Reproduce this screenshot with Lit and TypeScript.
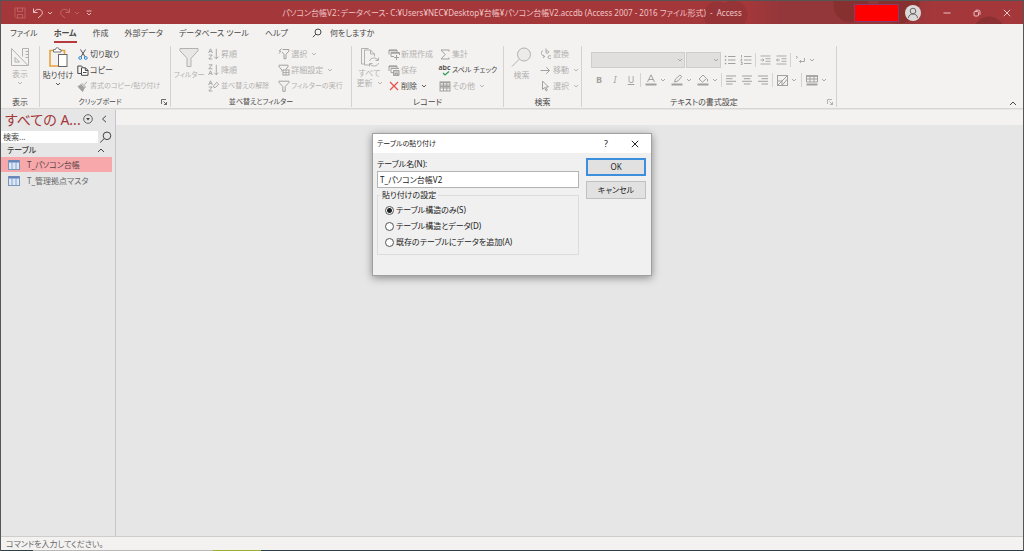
import { LitElement, html, svg, css, type SVGTemplateResult, type TemplateResult } from "lit";
import { customElement, property, state } from "lit/decorators.js";
import { classMap } from "lit/directives/class-map.js";

const icon = (w: number, h: number, body: SVGTemplateResult) => html`
  <svg width=${w} height=${h} viewBox="0 0 ${w} ${h}" fill="none" stroke="currentColor" stroke-width="1" aria-hidden="true">${body}</svg>`;

const chevron = icon(6, 4, svg`<path d="M1 1l2 2 2-2" stroke-width=".9"/>`);

const icons: Record<string, TemplateResult> = {
  save: icon(12, 12, svg`<path d="M1 1h10v10H2.500L1 9.500zM3.500 1v3.500h5V1M3.500 11V7.500h5V11" stroke-width=".8"/>`),
  undo: icon(12, 12, svg`<path d="M1.500 1.500v4h4M1.800 5.200C3 3.200 5 2 7.300 2.400c3 .6 4 3.800 2 5.800L6 11"/>`),
  redo: icon(12, 12, svg`<path d="M10.500 1.500v4h-4M10.200 5.200C9 3.200 7 2 4.700 2.400c-3 .6-4 3.800-2 5.800L6 11"/>`),
  more: icon(6, 6, svg`<path d="M.5 1h5M1 3l2 2 2-2" stroke-width=".9"/>`),
  search: icon(10, 10, svg`<circle cx="6" cy="4" r="3"/><path d="M3.800 6.200L.8 9.200"/>`),
  searchBig: icon(13, 12, svg`<circle cx="8" cy="4.800" r="3.800"/><path d="M5.200 7.600L1.200 11.500"/>`),
  person: icon(16, 16, svg`<circle cx="8" cy="8" r="8" fill="#dcdad9" stroke="none"/><circle cx="8" cy="6" r="2.800" stroke="#666"/><path d="M3.500 13c0-2.600 2-4 4.500-4s4.500 1.400 4.500 4" stroke="#666"/>`),
  min: icon(8, 8, svg`<path d="M.5 4h7"/>`),
  restore: icon(8, 8, svg`<rect x="1" y="2.500" width="4.500" height="4.500" rx="1"/><path d="M2.500 1.200h3q1.500 0 1.500 1.500v3"/>`),
  close: icon(8, 8, svg`<path d="M.8.8l6.400 6.400M7.200.8L.8 7.200"/>`),
  design: icon(20, 20, svg`<path d="M1.500 1.500v17h16.500zM5 10.500v4.500h4.500z"/><path d="M12.500 9.500v-8h6v17"/><path d="M15.500 4.500h3M15.500 7.500h3M15.500 10.500h3"/>`),
  paste: icon(20, 21, svg`<path d="M5.500 3.500H2v15.500h8M13 3.500h3.500V7" stroke="#e8a33d" stroke-width="1.600"/><path d="M5.500 5V2.500h2q0-1.800 1.800-1.800T11 2.500h2V5z" fill="#fff" stroke="#777"/><rect x="10.500" y="7.500" width="8.500" height="12" fill="#fff" stroke="#666"/>`),
  cut: icon(10, 11, svg`<path d="M2.500.5l4.700 7.500M7.500.5L2.800 8" stroke="#555"/><circle cx="2.200" cy="9" r="1.400" stroke="#2b88d8"/><circle cx="7.800" cy="9" r="1.400" stroke="#2b88d8"/>`),
  copy: icon(12, 11, svg`<path d="M4 8.500H.8V1h3.700L6 2.500" /><path d="M4.500 2.800h4l2.500 2.500v5H4.500zM8.300 3v2.500H11M6 7.500h3.500" fill="#fff"/>`),
  brush: icon(11, 11, svg`<path d="M10 .8L7.200 3.600"/><path d="M5 2.500l3.500 3.500-1 1L4 3.500z"/><path d="M3.800 4L1 5.500l4.500 5L7.200 7.300z" fill="currentColor"/>`),
  filterBig: icon(20, 21, svg`<path d="M1 1.500h18v2.300l-7 7.500v8.200H8v-8.200l-7-7.500z" fill="#e8e7e6"/>`),
  asc: icon(11, 12, svg`<path d="M.6 5L2.500.8 4.400 5M1.300 3.600h2.400M.8 7h3.400L.8 11h3.600M8.300.8v10M6.200 8.700l2.100 2.100 2.100-2.100" stroke-width=".9"/>`),
  desc: icon(11, 12, svg`<path d="M.8.800h3.400L.8 4.800h3.600M.6 11l1.900-4.200L4.400 11M1.300 9.600h2.400M8.300.8v10M6.200 8.700l2.100 2.100 2.100-2.100" stroke-width=".9"/>`),
  clearSort: icon(11, 12, svg`<path d="M.6 5L2.500.8 4.400 5M1.300 3.600h2.400M.8 7h3.400L.8 11h3.600M5.500 6l3.200-3.700 2 1.800L7.500 7.500H6z" stroke-width=".9"/>`),
  filterPick: icon(12, 12, svg`<path d="M4.500 1.500H11v1.500L8 6.200v4.500H6V6.200L4 4"/><path d="M3.500.5L1 3h2L1 5.500" stroke-width=".9"/>`),
  filterAdv: icon(12, 12, svg`<path d="M4 7.500V6L1 2.800V1.200h9v1.600L7.500 5.500"/><rect x="5" y="6" width="6" height="5"/><path d="M5 8.500h6M8 6v5" stroke-width=".8"/>`),
  filter: icon(12, 12, svg`<path d="M1 1.200h10v1.300L7.200 6.500v4.800H4.800V6.500L1 2.500z"/>`),
  refresh: icon(20, 21, svg`<path d="M4.500 17H1.500V1.500h7M9 18H4.500V3h6l4 4v2.500M10.500 3v4h4"/><path d="M9.500 14c1-3.500 6.500-4 8.500-1M18.500 10.500V13.500h-3M18.500 16c-1 3.500-6.500 4-8.500 1M9.500 19.500v-3h3"/>`),
  newRec: icon(12, 11, svg`<path d="M6 7.500H3V3.500h8.500V6M1 5.500V1h8v2M8.500 6v5M6 8.500h5"/><path d="M3 4h8M1 1.500h8" stroke-width="1.500"/>`),
  saveRec: icon(12, 11, svg`<path d="M5 7.500H3V3.500h8M1 6V1h8v2"/><path d="M1 1.500h8" stroke-width="1.500"/><path d="M5.500 5.500h5.500v5H5.500zM7 10.500V8.500h2.500v2" fill="#ccc"/>`),
  del: icon(10, 10, svg`<path d="M1 1l8 8M9 1L1 9" stroke="#e8504a" stroke-width="1.200"/>`),
  sum: icon(10, 11, svg`<path d="M9 2.500V1H1l4.200 4.500L1 10h8V8.500"/>`),
  spell: html`<span class="abc">abc</span>${icon(10, 5, svg`<path d="M3 2l2 2L9 .5" stroke="#2f9e57" stroke-width="1.200"/>`)}`,
  grid: icon(12, 11, svg`<rect x="1" y="1" width="10" height="9"/><path d="M1 4h10M1 7h10M4.500 1v9M7.800 1v9"/><path d="M1 1.500h10M1 5.500h10" stroke-width="1.500"/>`),
  find: icon(21, 21, svg`<circle cx="13" cy="7.500" r="6.500" fill="#ecebea"/><path d="M8.200 12.300L1 19.500"/>`),
  replace: icon(12, 12, svg`<path d="M6 .5v4.500M6 3.500c.5-1 2.800-1 2.800.5S6.500 5.500 6 4.800M11 8.200c-1-1-3-.6-3 1s2 2 3 1M3 2.500C.5 3.500.8 7.500 4.500 8.500M3 6.800l1.800 1.700-1.800 1.500" stroke-width=".9"/>`),
  goto: icon(11, 9, svg`<path d="M.5 4.500h9M6.200 1.200l3.300 3.300-3.300 3.300"/>`),
  pointer: icon(9, 12, svg`<path d="M1.500 1v8.500l2-2 1.500 3.300 1.300-.6-1.500-3.200h2.700z"/>`),
  bullets: icon(12, 10, svg`<path d="M4 1.500h7.500M4 5h7.500M4 8.500h7.500"/><path d="M.8 1.500h1.500M.8 5h1.500M.8 8.500h1.500" stroke-width="1.500"/>`),
  numbers: icon(12, 10, svg`<path d="M4 1.500h7.500M4 5h7.500M4 8.500h7.500M1.500 0v2.500M.8 4h1.200L.8 6h1.400M.8 7.500h1.400v2H.8" stroke-width=".9"/>`),
  indent: icon(11, 10, svg`<path d="M.5 1h10M5.500 3.700h5M5.500 6.300h5M.5 9h10M.5 5h3.500M2.500 3.500L4 5 2.500 6.500" stroke-width=".9"/>`),
  outdent: icon(11, 10, svg`<path d="M.5 1h10M5.500 3.700h5M5.500 6.300h5M.5 9h10M.5 5h3.500M2 3.500L.5 5 2 6.500" stroke-width=".9"/>`),
  direction: icon(11, 10, svg`<path d="M1 1l1.500 1.300L1 3.600M9.500 3v3.500H4.500M6 5L4.500 6.500 6 8" stroke-width=".9"/>`),
  fontColor: icon(12, 12, svg`<path d="M2.500 8L6 .8 9.500 8M3.700 5.500h4.600"/><path d="M.5 10.500h11" stroke-width="2"/>`),
  highlight: icon(12, 12, svg`<path d="M3.500 8l1-3L9 1l1.700 1.500L7 7z"/><path d="M.5 10.500h11" stroke-width="2"/>`),
  fill: icon(12, 12, svg`<path d="M2 5l4-4 3.500 3.500-4 3.700zM10.500 5v2.500"/><path d="M.5 10.500h11" stroke-width="2"/>`),
  left: icon(10, 10, svg`<path d="M0 1h10M0 3.700h6.500M0 6.300h10M0 9h6.500"/>`),
  center: icon(10, 10, svg`<path d="M0 1h10M1.800 3.700h6.500M0 6.300h10M1.800 9h6.500"/>`),
  right: icon(10, 10, svg`<path d="M0 1h10M3.500 3.700H10M0 6.300h10M3.500 9H10"/>`),
  altRow: icon(11, 11, svg`<rect x=".5" y=".5" width="10" height="10"/><path d="M.5 10.500l10-10M5 6v4.500M.5 6H5" /><path d="M5 10.500h5.500V4z"/>`),
  gridlines: icon(12, 11, svg`<path d="M.5 1h11v6H.5zM.5 4h11M4 1v6M8 1v6"/><path d="M0 1h12" stroke-width="1.600"/><path d="M.5 9.500h11" stroke-width="2"/>`),
  launcher: icon(6, 6, svg`<path d="M.5 5V.5H5M2.500 2.500l3 3M5.500 3v2.500H3" stroke-width=".8"/>`),
  up: icon(8, 5, svg`<path d="M1 4l3-3 3 3"/>`),
  back: icon(6, 8, svg`<path d="M5 .8L1.500 4 5 7.200"/>`),
  drop: icon(10, 10, svg`<circle cx="5" cy="5" r="4.300" stroke-width=".8"/><path d="M3 4h4L5 6.500z" fill="currentColor" stroke="none"/>`),
  table: icon(12, 10, svg`<rect x=".5" y=".5" width="11" height="9" fill="#dce8f7" stroke="#7d93b8"/><path d="M1 1.500h10" stroke="#5f82bb" stroke-width="2"/><path d="M4 2v7.500M8 2v7.500" stroke="#8aa4cc"/>`),
};

const shared = css`
  * { box-sizing: border-box; }
  button, input, select {
    font: inherit; color: inherit; margin: 0; padding: 0; border: 0;
    background: none; border-radius: 0; appearance: none; outline: none;
  }
  svg { display: block; flex: none; }
`;

interface Command { icon: string; label: string; live?: boolean; menu?: boolean; small?: boolean; }

@customElement("ribbon-bar")
export class RibbonBar extends LitElement {
  static styles = [shared, css`
    :host {
      display: flex; height: 65px; padding-top: 2px; background: #f3f2f1; color: #b3b1af;
      border-bottom: 1px solid #d8d6d4; font-size: 8px; line-height: 16px; white-space: nowrap;
    }
    .group { display: grid; grid-template-rows: 1fr 11px; border-right: 1px solid #d5d3d1; margin-bottom: 1px; flex: none; }
    .view { width: 39px; } .clip { width: 131px; } .sort { width: 181px; }
    .rec { width: 152px; } .find { width: 78px; } .text { width: 255px; }
    .body { display: flex; }
    .foot { display: flex; justify-content: center; align-items: center; position: relative; color: #4a4846; line-height: 11px; }
    .launch { padding-right: 10px; }
    .foot button { position: absolute; right: 3px; bottom: 2px; }
    .text .foot button { color: #a3a19f; }
    .big { display: flex; flex-direction: column; align-items: center; width: 36px; padding-top: 1px; line-height: 10px; gap: 2px; }
    .view .big { width: 38px; }
    .line { display: flex; align-items: center; gap: 4px; }
    .live { color: #4a4846; }
    .small { font-size: 7px; }
    .stack { display: flex; flex-direction: column; }
    .cmd { display: flex; align-items: center; gap: 1px; height: 16px; }
    .cmd > svg { margin-left: 3px; }
    .pic { width: 13px; display: flex; flex-direction: column; align-items: center; color: #a3a19f; }
    .live .pic { color: #4a4846; }
    .abc { font-size: 7px; line-height: 6px; font-weight: 600; }
    .sort .stack + .stack { margin-left: 8px; }
    .rec .stack + .stack { margin-left: 5px; }
    .rec .stack { min-width: 46px; }
    .rec .big { gap: 0; }
    .rec .big, .find .big { width: 35px; }
    .tools { display: flex; flex-direction: column; padding: 6px 0 0 9px; gap: 4px; color: #a3a19f; }
    .row { display: flex; align-items: center; height: 16px; }
    .combo { display: grid; grid-template-columns: 1fr 8px; align-items: center; justify-items: center; height: 16px; background: #e1dfdd; border: 1px solid #cfcdcb; margin-right: 1px; }
    .combo select { grid-area: 1 / 1 / 2 / 3; width: 100%; height: 14px; }
    .combo svg { grid-area: 1 / 2; }
    .face { width: 94px; } .size { width: 35px; }
    .tool { display: flex; align-items: center; justify-content: center; width: 16px; height: 16px; }
    .drop { width: 26px; gap: 3px; }
    .sep { width: 1px; height: 14px; background: #d5d3d1; margin: 0 1px; }
    .glyph { font-size: 9px; }
    .b { font-weight: 700; } .i { font-style: italic; } .u { text-decoration: underline; }
    .collapse { margin: auto 6px 2px auto; color: #4a4846; }
  `];

  private cmd = (c: Command) => html`
    <button class=${classMap({ cmd: true, live: !!c.live, small: !!c.small })}>
      <span class="pic">${icons[c.icon]}</span><span>${c.label}</span>${c.menu ? chevron : ""}
    </button>`;

  private stack = (items: Command[]) => html`<div class="stack">${items.map(this.cmd)}</div>`;

  private big = (name: string, label: string, live = false, menu = false, small = false) => html`
    <button class=${classMap({ big: true, live, small })}>${icons[name]}<span>${label}</span>${menu ? chevron : ""}</button>`;

  private group = (cls: string, label: string, body: unknown, launcher = false, small = false) => html`
    <section class="group ${cls}">
      <div class="body">${body}</div>
      <div class=${classMap({ foot: true, launch: launcher, small })}>${label}${launcher ? html`<button aria-label="${label}のオプション">${icons.launcher}</button>` : ""}</div>
    </section>`;

  private tool = (name: string, label: string, menu = false) => html`
    <button class=${classMap({ tool: true, drop: menu })} aria-label=${label}>${icons[name]}${menu ? chevron : ""}</button>`;

  render() {
    const sep = html`<span class="sep"></span>`;
    return html`
      ${this.group("view", "表示", this.big("design", "表示", false, true))}
      ${this.group("clip", "クリップボード", html`
        ${this.big("paste", "貼り付け", true, true)}
        ${this.stack([
          { icon: "cut", label: "切り取り", live: true },
          { icon: "copy", label: "コピー", live: true },
          { icon: "brush", label: "書式のコピー/貼り付け", small: true },
        ])}`, true, true)}
      ${this.group("sort", "並べ替えとフィルター", html`
        ${this.big("filterBig", "フィルター", false, false, true)}
        ${this.stack([
          { icon: "asc", label: "昇順" },
          { icon: "desc", label: "降順" },
          { icon: "clearSort", label: "並べ替えの解除", small: true },
        ])}
        ${this.stack([
          { icon: "filterPick", label: "選択", menu: true },
          { icon: "filterAdv", label: "詳細設定", menu: true },
          { icon: "filter", label: "フィルターの実行", small: true },
        ])}`, false, true)}
      ${this.group("rec", "レコード", html`
        <button class="big">${icons.refresh}<span>すべて</span><span class="line">更新${chevron}</span></button>
        ${this.stack([
          { icon: "newRec", label: "新規作成" },
          { icon: "saveRec", label: "保存" },
          { icon: "del", label: "削除", live: true, menu: true },
        ])}
        ${this.stack([
          { icon: "sum", label: "集計" },
          { icon: "spell", label: "スペル チェック", live: true, small: true },
          { icon: "grid", label: "その他", menu: true },
        ])}`)}
      ${this.group("find", "検索", html`
        ${this.big("find", "検索")}
        ${this.stack([
          { icon: "replace", label: "置換" },
          { icon: "goto", label: "移動", menu: true },
          { icon: "pointer", label: "選択", menu: true },
        ])}`)}
      ${this.group("text", "テキストの書式設定", html`
        <div class="tools">
          <div class="row">
            <span class="combo face"><select aria-label="フォント"></select>${chevron}</span>
            <span class="combo size"><select aria-label="フォント サイズ"></select>${chevron}</span>
            ${this.tool("bullets", "箇条書き")}${this.tool("numbers", "段落番号")}${sep}
            ${this.tool("indent", "インデント")}${this.tool("outdent", "インデント解除")}${sep}
            ${this.tool("direction", "文字列の方向", true)}
          </div>
          <div class="row">
            <button class="tool glyph b">B</button><button class="tool glyph i">I</button><button class="tool glyph u">U</button>${sep}
            ${this.tool("fontColor", "フォントの色", true)}${this.tool("highlight", "蛍光ペン", true)}${this.tool("fill", "背景色", true)}${sep}
            ${this.tool("left", "左揃え")}${this.tool("center", "中央揃え")}${this.tool("right", "右揃え")}${sep}
            ${this.tool("altRow", "交互の行の色", true)}${sep}
            ${this.tool("gridlines", "枠線", true)}
          </div>
        </div>`, true)}
      <button class="collapse" aria-label="リボンを折りたたむ">${icons.up}</button>`;
  }
}

@customElement("nav-pane")
export class NavPane extends LitElement {
  @state() private selected = 0;
  static styles = [shared, css`
    :host { display: flex; flex-direction: column; width: 115px; flex: none; background: #e6e6e6; border-right: 1px solid #c4c4cc; padding-right: 3px; color: #444; font-size: 8px; }
    .head { display: flex; align-items: center; height: 20px; padding: 0 5px 0 4px; gap: 8px; }
    .head button { margin-top: -3px; }
    h2 { margin: 0; flex: 1; min-width: 0; white-space: nowrap; font-size: 14px; line-height: 20px; font-weight: 400; color: #a4373a; }
    .find { display: flex; align-items: center; height: 13px; }
    .find input { flex: 1; min-width: 0; height: 12px; background: #fff; padding-left: 2px; margin-right: 1px; }
    .find input::placeholder { color: #444; }
    .section { display: flex; align-items: center; justify-content: space-between; height: 14px; padding: 0 7px 0 6px; font-weight: 500; }
    .item { display: flex; align-items: center; gap: 7px; height: 15px; padding-left: 7px; margin-bottom: 1px; color: #666; text-align: left; }
    .on { background: #f7a8ab; color: #5b4445; }
  `];
  render() {
    return html`
      <div class="head"><h2>すべての A...</h2><button aria-label="表示の選択">${icons.drop}</button><button aria-label="閉じる">${icons.back}</button></div>
      <div class="find"><input aria-label="検索" placeholder="検索..." /><button aria-label="検索の実行">${icons.searchBig}</button></div>
      <button class="section"><span>テーブル</span>${icons.up}</button>
      ${["T_パソコン台帳", "T_管理拠点マスタ"].map((t, i) => html`
        <button class=${classMap({ item: true, on: i === this.selected })} @click=${() => (this.selected = i)}>${icons.table}<span>${t}</span></button>`)}`;
  }
}

@customElement("paste-dialog")
export class PasteDialog extends LitElement {
  @property() name = "T_パソコン台帳V2";
  static styles = [shared, css`
    :host { display: block; width: 280px; background: #f0f0f0; border: 1px solid #a0a0a0; box-shadow: 0 2px 8px rgba(0, 0, 0, .4); color: #222; font-size: 8px; line-height: 12px; }
    .title { display: flex; align-items: center; height: 19px; background: #fff; padding: 0 12px 0 4px; gap: 23px; }
    .title h1 { flex: 1; margin: 0; font-size: 7px; font-weight: 400; }
    .help { font-size: 9px; }
    .main { display: grid; grid-template-columns: 1fr 60px; gap: 7px; padding: 5px 5px 20px 4px; }
    .field { display: block; height: 12px; }
    .name { display: block; width: 100%; height: 17px; background: #fff; border: 1px solid #b4b4b4; padding: 0 2px; margin-top: 1px; }
    fieldset { margin: 1px 0 0; padding: 1px 5px 4px 7px; border: 1px solid #dcdcdc; min-width: 0; }
    legend { padding: 0 2px; margin-left: -5px; }
    .opt { display: flex; align-items: center; gap: 2px; height: 16px; }
    .opt input { width: 9px; height: 9px; border: 1px solid #555; border-radius: 50%; background: #fff; }
    .opt input:checked { background: radial-gradient(circle, #222 0 2px, #fff 3px); }
    .actions { display: flex; flex-direction: column; gap: 5px; }
    .actions button { height: 18px; background: #e1e1e1; border: 1px solid #c0c0c0; }
    .actions .ok { border: 2px solid #3c8fdc; }
  `];
  render() {
    return html`
      <div class="title"><h1>テーブルの貼り付け</h1><button class="help" aria-label="ヘルプ">?</button><button aria-label="閉じる">${icons.close}</button></div>
      <div class="main">
        <div>
          <label class="field" for="name">テーブル名(N):</label>
          <input class="name" id="name" .value=${this.name} />
          <fieldset>
            <legend>貼り付けの設定</legend>
            ${["テーブル構造のみ(S)", "テーブル構造とデータ(D)", "既存のテーブルにデータを追加(A)"].map((t, i) => html`
              <label class="opt"><input type="radio" name="mode" ?checked=${i === 0} />${t}</label>`)}
          </fieldset>
        </div>
        <div class="actions"><button class="ok">OK</button><button>キャンセル</button></div>
      </div>`;
  }
}

@customElement("app-root")
export class AppRoot extends LitElement {
  static styles = [shared, css`
    :host {
      display: flex; flex-direction: column; height: 100vh; position: relative; overflow: hidden;
      font-family: "Noto Sans", "Noto Sans CJK JP", sans-serif; font-feature-settings: "palt" 1; font-size: 8px; line-height: 12px; color: #4a4846;
      background: #f3f2f1; border: 1px solid #555; border-bottom: 0;
    }
    .titlebar {
      display: grid; grid-template-columns: 1fr auto 1fr; align-items: center; height: 23px; flex: none; color: #f0c4c5;
      background:
        radial-gradient(circle at right 306px top 14px, #963336 0 13px, transparent 14px),
        radial-gradient(circle at right 290px top 14px, #963336 0 14px, transparent 15px),
        radial-gradient(circle at right 172px top 4px, #86302f 0 17px, transparent 18px),
        radial-gradient(circle at right 124px top 2px, #86302f 0 20px, transparent 21px),
        radial-gradient(circle at right 34px bottom -8px, #8b3033 0 15px, transparent 16px),
        linear-gradient(90deg, transparent calc(100% - 275px), #93373a calc(100% - 240px), #93373a calc(100% - 120px), #a4373a calc(100% - 90px)), #a4373a;
    }
    .quick { display: flex; align-items: center; padding-left: 13px; }
    .quick button { display: flex; align-items: center; gap: 3px; margin-right: 6px; }
    .dim { color: #c4676a; }
    .caption { white-space: nowrap; }
    .window { display: flex; align-items: center; justify-content: flex-end; padding-right: 12px; gap: 22px; }
    .account { display: flex; align-items: center; gap: 6px; }
    .mask { width: 45px; height: 18px; background: #f00; border: 1px solid #8a3a6a; }
    .tabs { display: flex; align-items: center; height: 20px; flex: none; padding-left: 9px; gap: 16px; white-space: nowrap; }
    .tabs button { height: 18px; border-bottom: 2px solid transparent; display: flex; align-items: center; gap: 8px; }
    .tabs .on { border-color: #b8393d; font-weight: 700; }
    .tabs .ask { margin-left: 8px; }
    .work { display: flex; flex: 1; min-height: 0; border-top: 1px solid #e8e6e4; }
    .canvas { flex: 1; background: #e6e6e6; border-top: 15px solid #f3f2f1; }
    .status { flex: none; height: 14px; line-height: 13px; padding-left: 5px; border-top: 1px solid #cfcdcb; color: #666; }
    .edge { flex: none; height: 2px; background: linear-gradient(90deg, #2c4048 0 32px, #b8b8b8 32px 212px, #9cae32 212px 260px, #2c4048 260px); }
    .overlay { position: absolute; inset: 0; padding-top: 132px; display: flex; justify-content: center; align-items: flex-start; pointer-events: none; }
    .overlay paste-dialog { pointer-events: auto; }
  `];

  render() {
    return html`
      <header class="titlebar">
        <div class="quick">
          <button class="dim" aria-label="上書き保存">${icons.save}</button>
          <button aria-label="元に戻す">${icons.undo}${chevron}</button>
          <button class="dim" aria-label="やり直し">${icons.redo}${chevron}</button>
          <button aria-label="カスタマイズ">${icons.more}</button>
        </div>
        <span class="caption">パソコン台帳V2：データベース- C:¥Users¥NEC¥Desktop¥台帳¥パソコン台帳V2.accdb (Access 2007 - 2016 ファイル形式)&nbsp; -&nbsp; Access</span>
        <div class="window">
          <div class="account"><span class="mask"></span>${icons.person}</div>
          <button aria-label="最小化">${icons.min}</button>
          <button aria-label="元のサイズ">${icons.restore}</button>
          <button aria-label="閉じる">${icons.close}</button>
        </div>
      </header>
      <nav class="tabs">
        <button>ファイル</button><button class="on">ホーム</button><button>作成</button><button>外部データ</button>
        <button>データベース ツール</button><button>ヘルプ</button><button class="ask">${icons.search}何をしますか</button>
      </nav>
      <ribbon-bar></ribbon-bar>
      <div class="work"><nav-pane></nav-pane><main class="canvas"></main></div>
      <footer class="status">コマンドを入力してください。</footer>
      <div class="edge"></div>
      <div class="overlay"><paste-dialog></paste-dialog></div>`;
  }
}
